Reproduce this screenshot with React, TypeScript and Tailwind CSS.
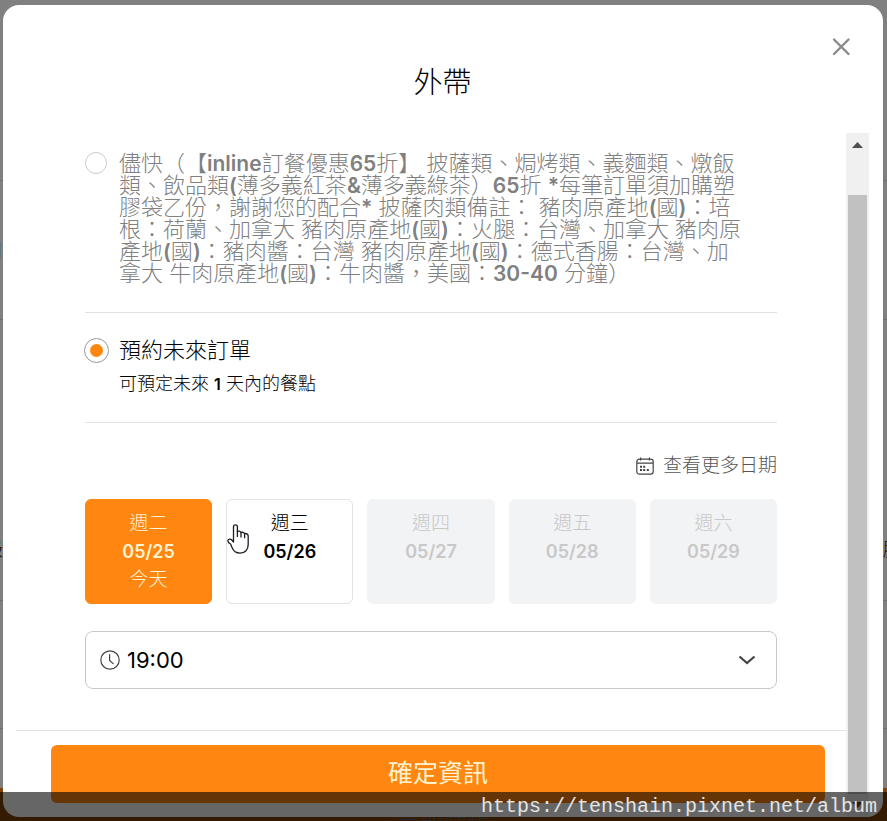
import React, { useState } from 'react';

const asapLines = [
  '儘快（【inline訂餐優惠65折】 披薩類、焗烤類、義麵類、燉飯',
  '類、飲品類(薄多義紅茶&薄多義綠茶）65折 *每筆訂單須加購塑',
  '膠袋乙份，謝謝您的配合* 披薩肉類備註： 豬肉原產地(國)：培',
  '根：荷蘭、加拿大 豬肉原產地(國)：火腿：台灣、加拿大 豬肉原',
  '產地(國)：豬肉醬：台灣 豬肉原產地(國)：德式香腸：台灣、加',
  '拿大 牛肉原產地(國)：牛肉醬，美國：30-40 分鐘）',
];

const days = [
  { week: '週二', date: '05/25', note: '今天', disabled: false },
  { week: '週三', date: '05/26', note: '', disabled: false },
  { week: '週四', date: '05/27', note: '', disabled: true },
  { week: '週五', date: '05/28', note: '', disabled: true },
  { week: '週六', date: '05/29', note: '', disabled: true },
];

// Latin runs are set heavier than the Chinese text around them
const Mixed = ({ text, latin }: { text: string; latin: string }) => (
  <>
    {text.split(/([!-~]+)/).map((part, i) =>
      i % 2 ? <span key={i} className={latin}>{part}</span> : part
    )}
  </>
);

const CalendarIcon = () => (
  <svg viewBox="0 0 18 18" className="h-[18px] w-[18px]" fill="none" stroke="#444" strokeWidth="1.2">
    <rect x="0.8" y="2.2" width="16.4" height="15" rx="2.6" />
    <path d="M1 6.1h16M4.6 0.4v3.2M13.4 0.4v3.2" />
    <path d="M4 9.8h2M7.2 9.8h2M4 13h2M7.2 13h2M10.8 13h2" strokeWidth="2" />
  </svg>
);

const ClockIcon = () => (
  <svg viewBox="0 0 20 20" className="h-5 w-5 shrink-0" fill="none" stroke="#444" strokeWidth="1.2" strokeLinecap="round">
    <circle cx="10" cy="10" r="9.2" />
    <path d="M9.6 4.6v5.8l3.6 3.2" />
  </svg>
);

const HandCursor = () => (
  <svg viewBox="0 0 22 30" className="pointer-events-none absolute left-0 top-6 h-[30px] w-[22px]" fill="#fff" stroke="#1c1c24" strokeWidth="1.3" strokeLinejoin="round">
    <path d="M6.5 18V2.6C6.5 0.2 10.4 0.2 10.4 2.6V7.6C11.6 6.6 13.6 7 14 8.6C15.4 7.8 17.2 8.4 17.6 9.8C19.2 9 21.2 10 21.2 12V20.5C21.2 25.5 18 29.2 13 29.2C8.6 29.2 6.4 27 5 23.6L3.6 20C2.4 19.4 0.8 18.4 0.8 16.8C1 14.8 3.6 14.8 4.8 16Z" />
    <path d="M10.4 7v6M14 8.4v5M17.6 9.8v4.4" fill="none" />
  </svg>
);

const Backdrop = () => (
  <div aria-hidden="true" className="absolute inset-0 flex flex-col overflow-hidden bg-[#808080] text-lg text-black">
    <div className="h-[181px] shrink-0 border-b border-[#6e6e6e]" />
    <div className="flex h-[139px] shrink-0 items-center border-b border-[#6e6e6e]">
      <span className="-ml-[15px]">目</span>
    </div>
    <div className="flex h-[281px] shrink-0 items-end justify-between border-b border-[#6e6e6e] pb-9">
      <span className="-ml-[15px]">級</span>
      <span className="-mr-[14px]">膠</span>
    </div>
    <div className="h-32 shrink-0 border-b border-[#6e6e6e]" />
    <div className="h-[59px] shrink-0" />
    <div className="flex-1 bg-[#804308] pt-[22px] text-center text-2xl leading-8 font-light text-[#555e70]">立即結帳</div>
  </div>
);

const ScrollBar = () => (
  <div aria-hidden="true" className="flex w-[23px] shrink-0 flex-col items-center bg-[#f0f0f0]">
    <svg viewBox="0 0 23 23" className="h-[23px] w-[23px]" fill="#505050"><path d="M6 15l5.5-6 5.5 6z" /></svg>
    <div className="mt-[39px] w-[19px] flex-1 bg-[#c1c1c1]" />
    <svg viewBox="0 0 23 23" className="h-[23px] w-[23px]" fill="#505050"><path d="M6 8l5.5 6L17 8z" /></svg>
  </div>
);

export default function App() {
  const [mode, setMode] = useState('future');
  const [selected, setSelected] = useState('05/25');

  return (
    <div className="relative flex h-screen flex-col px-[3px] pt-[5px] pb-1 font-light [font-family:Inter,'Noto_Sans_CJK_TC',sans-serif]">
      <Backdrop />

      <div role="dialog" aria-labelledby="title" className="relative mr-px flex min-h-0 flex-1 flex-col overflow-hidden rounded-2xl bg-white pl-[13px] pr-[14px]">
        <header className="relative flex h-32 shrink-0 items-center justify-center pt-7">
          <h1 id="title" className="text-[29px] text-black">外帶</h1>
          <button type="button" aria-label="關閉" className="absolute right-[18px] top-8">
            <svg viewBox="0 0 20 20" className="h-5 w-5" fill="none" stroke="#8a8a8a" strokeWidth="2.4" strokeLinecap="round">
              <path d="M3 2.500l14.500 14.500M17.500 2.500l-14.500 14.500" />
            </svg>
          </button>
        </header>

        <div className="flex min-h-0 flex-1">
          <div className="min-w-0 flex-1">
            <div className="px-[69px] pt-[19px]">
              <label className="flex gap-3 border-b border-[#e2e2e2] pb-7 text-[22px] leading-[22px] text-[#808080] [text-spacing-trim:space-all]">
                <input
                  type="radio"
                  name="mode"
                  checked={mode === 'asap'}
                  onChange={() => setMode('asap')}
                  className="h-[22px] w-[22px] shrink-0 appearance-none rounded-full border border-[#ccc] bg-clip-content p-1 checked:bg-[#ff8610]"
                />
                <span className="whitespace-nowrap">
                  {asapLines.map(line => (
                    <span key={line} className="block"><Mixed text={line} latin="text-[21px] leading-none font-semibold" /></span>
                  ))}
                </span>
              </label>

              <label className="flex gap-[10px] border-b border-[#e2e2e2] pt-6 pb-6 text-black">
                <input
                  type="radio"
                  name="mode"
                  checked={mode === 'future'}
                  onChange={() => setMode('future')}
                  className="-ml-px mt-px h-[25px] w-[25px] shrink-0 appearance-none rounded-full border border-[#999] bg-clip-content p-[5px] checked:bg-[#ff8610]"
                />
                <span>
                  <span className="block text-[22px] leading-[26px]">預約未來訂單</span>
                  <span className="mt-[6px] block text-lg leading-[29px]"><Mixed text="可預定未來 1 天內的餐點" latin="text-base leading-none font-semibold" /></span>
                </span>
              </label>

              <div className="flex justify-end pt-[29px]">
                <button type="button" className="flex items-center gap-[9px] text-[19px] leading-7 text-[#555]">
                  <CalendarIcon />
                  查看更多日期
                </button>
              </div>

              <div className="mt-[19px] grid grid-cols-5 gap-[14px]">
                {days.map(day => (
                  <button
                    key={day.date}
                    type="button"
                    disabled={day.disabled}
                    onClick={() => setSelected(day.date)}
                    className={`relative flex h-[105px] flex-col items-center rounded-md border pt-[10px] text-[19px] leading-7 ${
                      day.disabled
                        ? 'border-[#f2f3f5] bg-[#f2f3f5] text-[#c8c8c8]'
                        : selected === day.date
                          ? 'border-[#ff8610] bg-[#ff8610] text-[#fff3d0]'
                          : 'border-[#e2e2e2] bg-white text-black'
                    }`}
                  >
                    <span>{day.week}</span>
                    <span className="text-lg leading-7 font-semibold">{day.date}</span>
                    <span>{day.note}</span>
                    {day.date === '05/26' && <HandCursor />}
                  </button>
                ))}
              </div>

              <div className="relative mt-[27px] flex h-[58px] items-center rounded-lg border border-[#c8c8c8] pl-[14px]">
                <ClockIcon />
                <select aria-label="時間" className="h-full flex-1 appearance-none bg-transparent pl-[7px] text-[22px] font-normal text-black">
                  <option>19:00</option>
                  <option>19:30</option>
                  <option>20:00</option>
                </select>
                <svg viewBox="0 0 18 10" className="pointer-events-none absolute right-5 h-[10px] w-[18px]" fill="none" stroke="#444" strokeWidth="2.2">
                  <path d="M1.5 1.5L9 8l7.500-6.500" />
                </svg>
              </div>
            </div>

            <footer className="mt-[41px] border-t border-[#e2e2e2] pr-[21px] pl-[35px] pt-[14px]">
              <button type="button" className="h-[58px] w-full rounded-md bg-[#ff8610] text-[25px] font-normal text-[#fff3d0]">
                確定資訊
              </button>
            </footer>
          </div>
          <ScrollBar />
        </div>
      </div>

      <div className="pointer-events-none absolute inset-x-0 bottom-0 h-[29px] bg-black/60 pr-[10px] text-right text-xl leading-[30px] font-normal text-[#e4e4e4] [font-family:'Liberation_Mono',monospace]">
        https://tenshain.pixnet.net/album
      </div>
    </div>
  );
}
